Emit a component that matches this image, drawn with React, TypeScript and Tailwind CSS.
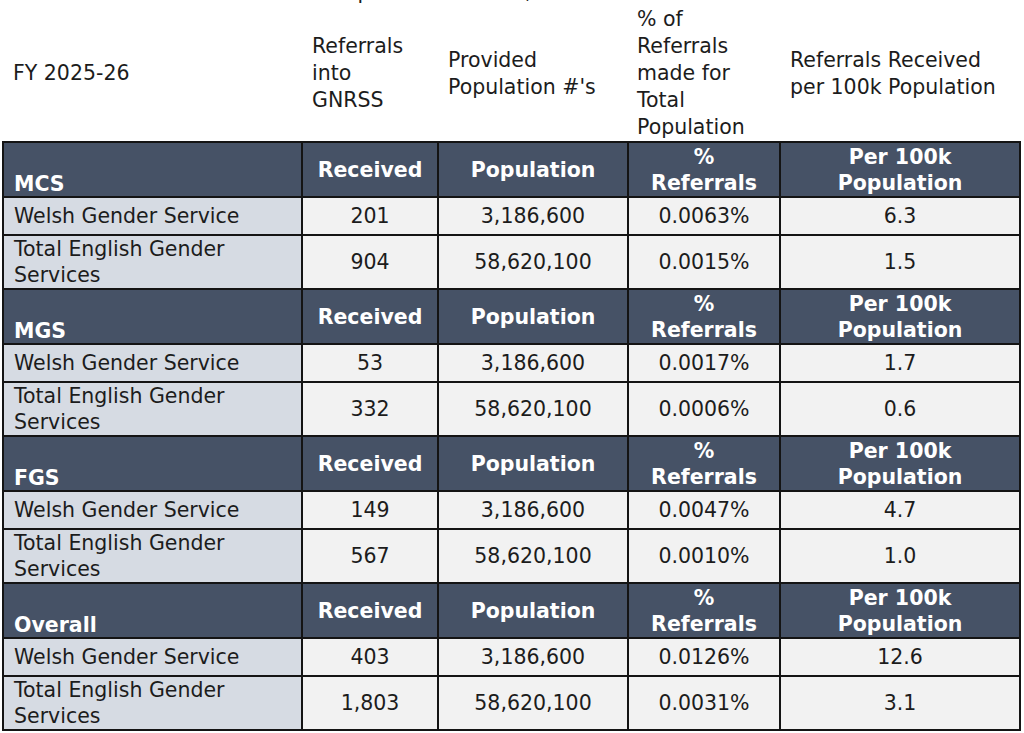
import React from 'react';

type Group = {
  name: string;
  welsh: string[];
  english: string[];
};

const groups: Group[] = [
  { name: 'MCS', welsh: ['201', '3,186,600', '0.0063%', '6.3'], english: ['904', '58,620,100', '0.0015%', '1.5'] },
  { name: 'MGS', welsh: ['53', '3,186,600', '0.0017%', '1.7'], english: ['332', '58,620,100', '0.0006%', '0.6'] },
  { name: 'FGS', welsh: ['149', '3,186,600', '0.0047%', '4.7'], english: ['567', '58,620,100', '0.0010%', '1.0'] },
  { name: 'Overall', welsh: ['403', '3,186,600', '0.0126%', '12.6'], english: ['1,803', '58,620,100', '0.0031%', '3.1'] },
];

const cell = 'border-2 border-[#141414]';

function GroupRows({ group }: { group: Group }) {
  return (
    <>
      {/* Section header */}
      <tr className="h-[55px] bg-[#465266] text-white font-bold">
        <td className={`${cell} align-bottom px-[10px] pb-0 leading-[24px]`}>{group.name}</td>
        <td className={`${cell} text-center`}>Received</td>
        <td className={`${cell} text-center`}>Population</td>
        <td className={`${cell} text-center`}>
          %<br />Referrals
        </td>
        <td className={`${cell} text-center`}>
          Per 100k<br />Population
        </td>
      </tr>
      <tr className="h-[38px]">
        <td className={`${cell} bg-[#d6dbe3] px-[10px]`}>Welsh Gender Service</td>
        {group.welsh.map((v, i) => (
          <td key={i} className={`${cell} bg-[#f2f2f2] text-center`}>{v}</td>
        ))}
      </tr>
      <tr className="h-[54px]">
        <td className={`${cell} bg-[#d6dbe3] px-[10px]`}>
          Total English Gender<br />Services
        </td>
        {group.english.map((v, i) => (
          <td key={i} className={`${cell} bg-[#f2f2f2] text-center`}>{v}</td>
        ))}
      </tr>
    </>
  );
}

export default function App() {
  return (
    <div className="w-[1024px] h-[733px] overflow-hidden bg-white text-[#1c1c1c] font-['DejaVu_Sans',_Verdana,_sans-serif] text-[20.5px] leading-[26px]">
      {/* Title, cut off at the top of the shot */}
      <div className="h-[6px] overflow-hidden">
        <div className="-mt-[21px] pl-[213px] leading-[27px] whitespace-nowrap">
          Referrals Comparison to Areas, 2025-26
        </div>
      </div>

      <table className="ml-[2px] w-[1017px] table-fixed border-collapse">
        <colgroup>
          <col className="w-[299px]" />
          <col className="w-[136px]" />
          <col className="w-[190px]" />
          <col className="w-[152px]" />
          <col className="w-[240px]" />
        </colgroup>
        <tbody>
          <tr className="h-[136px] leading-[27px]">
            <td className="px-[10px] align-middle">FY 2025-26</td>
            <td className="px-[10px] align-middle">
              Referrals<br />into<br />GNRSS
            </td>
            <td className="px-[10px] align-middle">
              Provided<br />Population #'s
            </td>
            <td className="px-[9px] align-middle">
              % of<br />Referrals<br />made for<br />Total<br />Population
            </td>
            <td className="px-[10px] align-middle">
              Referrals Received<br />per 100k Population
            </td>
          </tr>
          {groups.map((g) => (
            <GroupRows key={g.name} group={g} />
          ))}
        </tbody>
      </table>
    </div>
  );
}
